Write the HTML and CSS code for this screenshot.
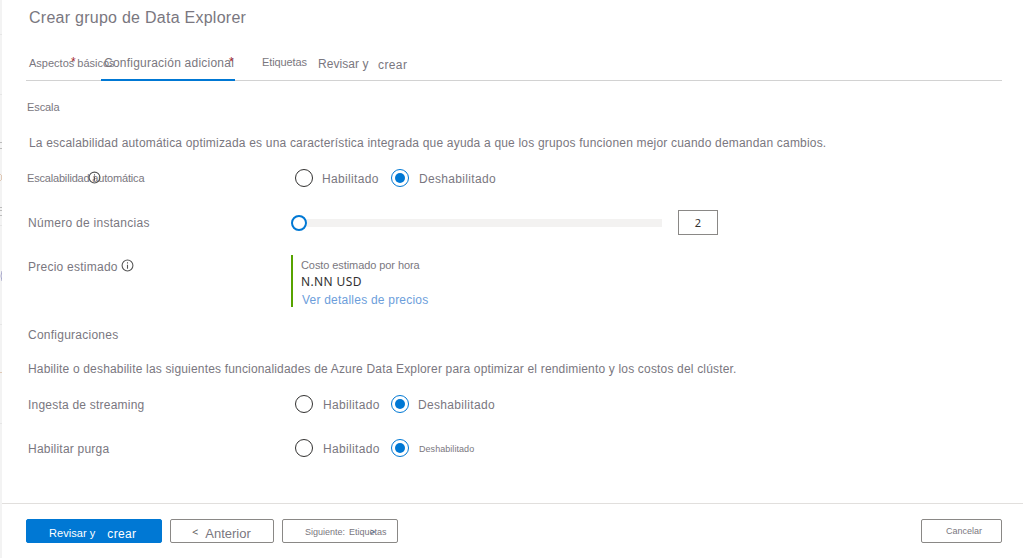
FILE: index.html
```html
<!DOCTYPE html>
<html lang="es">
<head>
<meta charset="utf-8">
<title>Crear grupo de Data Explorer</title>
<link rel="stylesheet" href="styles.css">
</head>
<body>
<div class="shell">
  <aside class="edge">
    <svg width="2" height="558" fill="none" stroke="#b9b9b9">
      <path d="M0 142.5H2M0 148.5H2M0 207.5H2M0 210.5H2M0 215.5H2" stroke="#bcbcbc"/>
      <path d="M0 34.5H2M0 94.5H2M0 225.5H2M0 324.5H2M0 423.5H2" stroke="#e6e6e6"/>
      <path d="M0 174.5H1M0 180.5H1M0 372.5H2M1.5 175V180" stroke="#e0c9b6"/>
      <path d="M2 271Q0 276 2 281" stroke="#a9a9cc"/>
    </svg>
  </aside>
  <main class="panel">
    <h1 class="title">Crear grupo de Data Explorer</h1>
    <nav class="tabs">
      <a class="tab tab-basics">Aspectos básicos<i class="star">*</i></a>
      <a class="tab tab-config active">Configuración adicional<i class="star">*</i></a>
      <a class="tab tab-tags">Etiquetas</a>
      <a class="tab tab-review">Revisar y</a>
      <a class="tab tab-create">crear</a>
    </nav>
    <section class="scale">
      <h2 class="heading small-text">Escala</h2>
      <p class="intro">La escalabilidad automática optimizada es una característica integrada que ayuda a que los grupos funcionen mejor cuando demandan cambios.</p>
      <div class="row">
        <div class="label label-auto">Escalabilidad automática
          <svg class="info" viewBox="0 0 12 12"><circle cx="6" cy="6" r="5"/><path d="M6 5.2V9M6 3V4.2"/></svg>
        </div>
        <div class="choices"><span class="radio"></span><span class="option">Habilitado</span><span class="radio on"></span><span class="option no">Deshabilitado</span></div>
      </div>
      <div class="row row-count">
        <div class="label label-count">Número de instancias</div>
        <div class="slider"><span class="knob"></span><span class="track"></span></div>
        <div class="count">2</div>
      </div>
      <div class="row row-price">
        <div class="label label-price">Precio estimado<svg class="info" viewBox="0 0 12 12"><circle cx="6" cy="6" r="5"/><path d="M6 5.2V9M6 3V4.2"/></svg></div>
        <div class="price">
          <span class="price-title">Costo estimado por hora</span>
          <span class="price-value">N.NN USD</span>
          <a class="price-link">Ver detalles de precios</a>
        </div>
      </div>
    </section>
    <section class="settings">
      <h2 class="heading">Configuraciones</h2>
      <p class="intro">Habilite o deshabilite las siguientes funcionalidades de Azure Data Explorer para optimizar el rendimiento y los costos del clúster.</p>
      <div class="row row-stream">
        <div class="label">Ingesta de streaming</div>
        <div class="choices"><span class="radio"></span><span class="option">Habilitado</span><span class="radio on"></span><span class="option no">Deshabilitado</span></div>
      </div>
      <div class="row row-purge">
        <div class="label">Habilitar purga</div>
        <div class="choices"><span class="radio"></span><span class="option">Habilitado</span><span class="radio on"></span><span class="option no tiny">Deshabilitado</span></div>
      </div>
    </section>
    <footer class="footer">
      <button class="btn primary"><span>Revisar y</span><span class="create">crear</span></button>
      <button class="btn previous"><span class="arrow">&lt;</span><span class="previous-text">Anterior</span></button>
      <button class="btn next"><span>Siguiente:</span><span>Etiquetas</span><i class="next-arrow">&gt;</i></button>
      <button class="btn cancel">Cancelar</button>
    </footer>
  </main>
</div>
</body>
</html>
```
FILE: styles.css
```css
* { box-sizing: border-box; }
body {
  margin: 0;
  background: #fff;
  color: #7a7780;
  font: 12px/16px "Liberation Sans", Arial, sans-serif;
  letter-spacing: .22px;
}
.shell { display: flex; height: 558px; overflow: hidden; }
.edge { width: 2px; background: #f3f3f3; }
.edge svg { display: block; }
.panel { display: flex; flex-direction: column; width: 1021px; }
.title {
  height: 48px;
  margin: 0;
  padding: 8px 0 0 27px;
  font-size: 16px;
  font-weight: 400;
  line-height: 20px;
  letter-spacing: .26px;
}
.tabs {
  display: flex;
  width: 976px;
  height: 33px;
  margin-left: 24px;
  border-bottom: 1px solid #d2d2d2;
}
.tab { position: relative; height: 33px; padding-top: 7px; white-space: nowrap; }
.tab-basics { width: 75px; padding-left: 3px; font-size: 11px; letter-spacing: 0; }
.tab-config { width: 134px; padding-left: 3px; letter-spacing: .23px; }
.active { border-bottom: 2px solid #0078d4; }
.tab-tags { width: 56px; margin-left: 27px; padding-top: 6px; font-size: 11px; letter-spacing: -.1px; }
.tab-review { width: 60px; padding-top: 8px; letter-spacing: .05px; }
.tab-create { padding-top: 9px; letter-spacing: .4px; }
.star { position: absolute; top: 6px; left: 45px; color: #a4262c; font-size: 12px; font-style: normal; }
.tab-config .star { left: 128px; }
.heading { height: 16px; margin: 0 0 0 26px; font-size: 12px; font-weight: 400; letter-spacing: .25px; }
.small-text { margin-left: 25px; font-size: 11px; letter-spacing: -.1px; }
.intro { margin: 20px 0 0 27px; white-space: nowrap; letter-spacing: .19px; }
.scale { height: 246px; padding-top: 18px; }
.settings { height: 176px; }
.settings .intro { margin: 18px 0 0 26px; letter-spacing: .173px; }
.row { display: flex; margin-left: 26px; }
.scale .row { margin-top: 17px; }
.label { position: relative; width: 266px; height: 20px; padding-top: 3px; white-space: nowrap; }
.label-auto { margin-left: -1px; width: 267px; padding-top: 2px; font-size: 11px; letter-spacing: -.18px; }
.label-auto .info { position: absolute; left: 61px; top: 3px; }
.info { width: 13px; height: 13px; fill: none; stroke: #555; stroke-width: 1; }
.choices { display: flex; align-items: center; height: 20px; }
.radio {
  display: flex;
  width: 18px;
  height: 18px;
  margin-left: 1px;
  border: 1px solid #323130;
  border-radius: 50%;
}
.radio.on { margin-left: 0; border-color: #0078d4; align-items: center; justify-content: center; }
.radio.on::after { content: ""; width: 10px; height: 10px; border-radius: 50%; background: #0078d4; }
.option { width: 69px; margin: 1px 0 0 9px; letter-spacing: .35px; }
.option.no { margin-left: 10px; letter-spacing: .32px; }
.scale .row-count { margin-top: 22px; }
.label-count { letter-spacing: .28px; padding-top: 5px; }
.slider { display: flex; align-items: center; width: 371px; height: 26px; margin-left: -3px; }
.knob { width: 16px; height: 16px; border: 2px solid #0078d4; border-radius: 50%; }
.track { flex: 1; height: 8px; background: #f3f2f1; }
.count {
  width: 40px;
  height: 25px;
  margin-left: 16px;
  border: 1px solid #8a8886;
  color: #323130;
  font: 11px/24px "Noto Sans", sans-serif;
  text-align: center;
}
.scale .row-price { margin-top: 19px; }
.label-price { padding-top: 4px; letter-spacing: .25px; }
.label-price .info { margin: 0 0 -1px 3px; }
.price {
  display: flex;
  flex-direction: column;
  width: 200px;
  height: 52px;
  margin-left: -3px;
  padding: 2px 0 0 8px;
  border-left: 2px solid #57a300;
}
.price-title { font-size: 11px; letter-spacing: -.08px; }
.price-value { color: #323130; font: 12px/17px "Noto Sans", sans-serif; letter-spacing: .38px; }
.price-link { margin: 2px 0 0 1px; color: #6c9edb; letter-spacing: .22px; }
.row-stream { margin-top: 17px; }
.row-stream .option, .row-purge .option { margin-left: 10px; width: 68px; }
.row-stream .option.no { margin-left: 9px; }
.row-purge { margin-top: 24px; }
.option.tiny { font-size: 9px; letter-spacing: .05px; }
.footer { display: flex; height: 55px; margin-top: auto; padding: 15px 21px 0 24px; border-top: 1px solid #e1dfdd; }
.btn {
  position: relative;
  display: flex;
  height: 24px;
  padding: 0;
  border: 1px solid #8a8886;
  border-radius: 2px;
  background: #fff;
  color: inherit;
  font: 9px/16px "Liberation Sans", Arial, sans-serif;
  letter-spacing: 0;
  white-space: nowrap;
}
.primary { width: 136px; padding: 5px 0 0 22px; border-color: #0078d4; background: #0078d4; color: #fff; font-size: 11px; letter-spacing: .05px; }
.create { margin: 1px 0 0 12px; font-size: 12px; letter-spacing: .35px; }
.previous { width: 104px; margin-left: 8px; padding: 4px 0 0 21px; }
.arrow { font: 11px/16px "Noto Sans", sans-serif; color: #605e5c; }
.previous-text { margin: 2px 0 0 7px; font-size: 13px; }
.next { width: 116px; margin-left: 8px; padding: 4px 0 0 22px; gap: 4px; }
.next-arrow { position: absolute; left: 87px; top: 4px; color: #526a85; font-style: normal; font-size: 9px; }
.cancel { width: 81px; margin-left: auto; padding: 3px 0 0 24px; }
```
